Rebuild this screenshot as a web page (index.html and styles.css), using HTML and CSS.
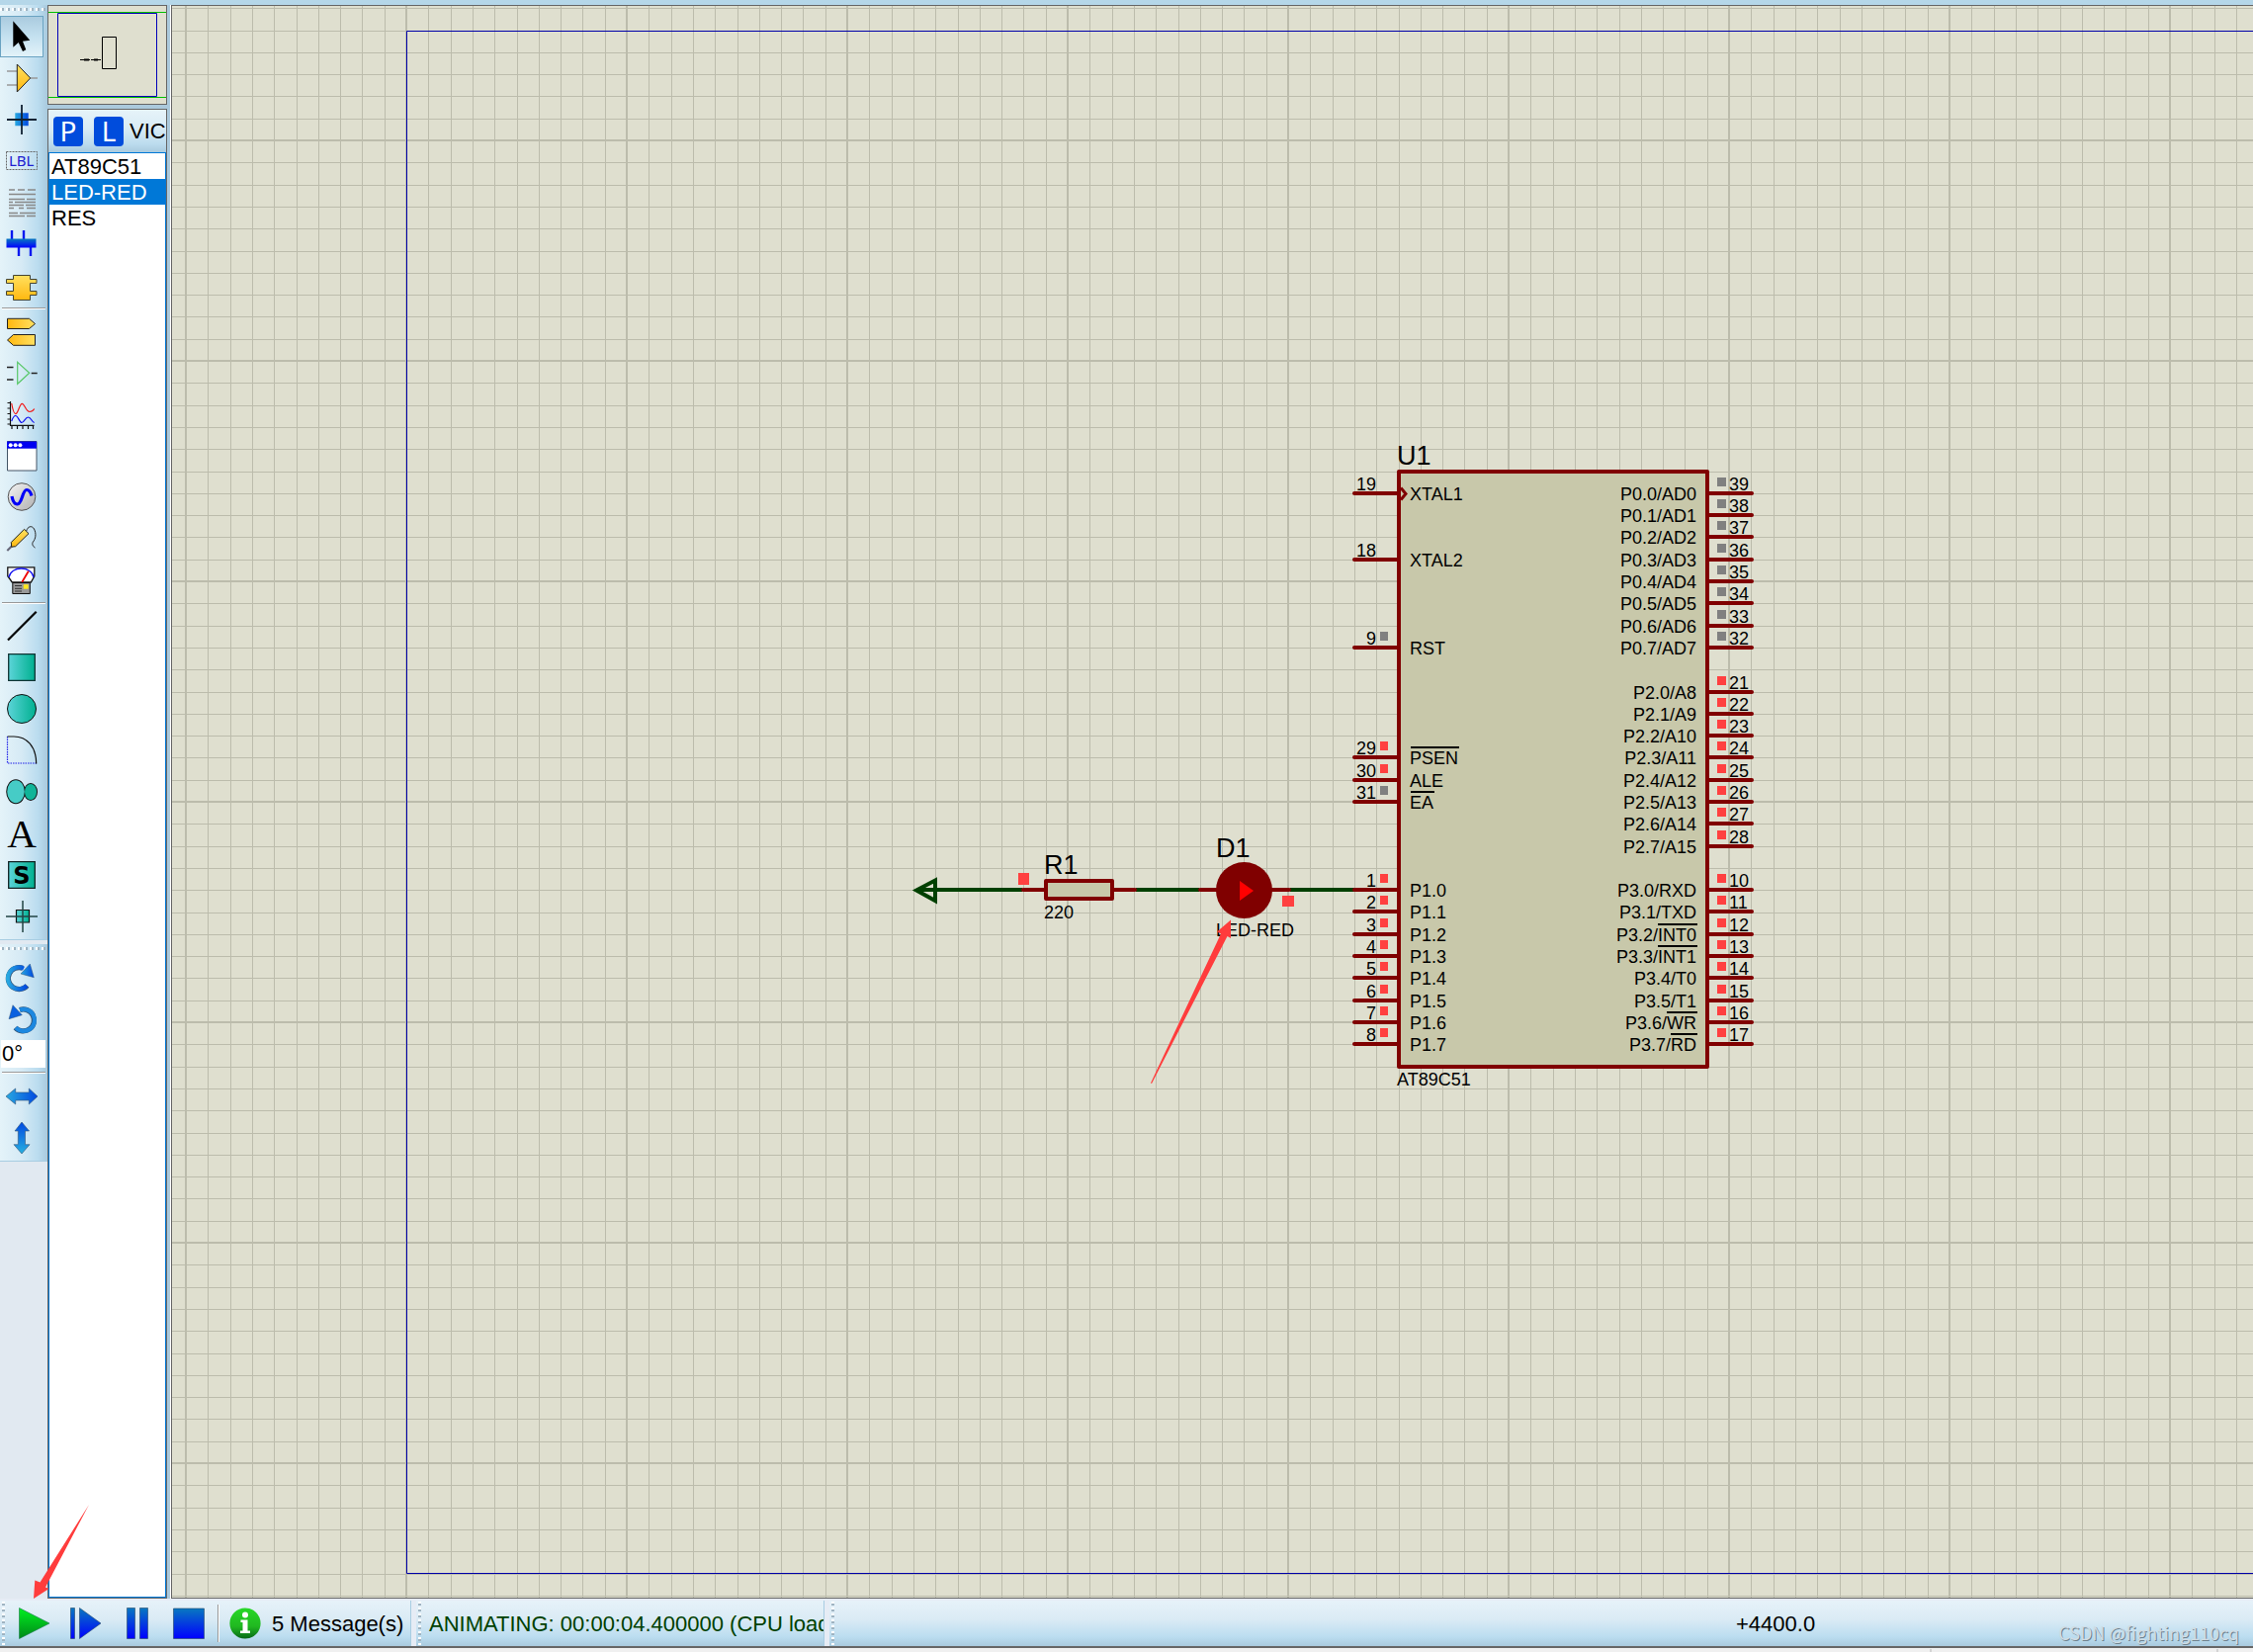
FILE: index.html
```html
<!DOCTYPE html>
<html lang="en">
<head>
<meta charset="utf-8">
<title>Schematic Capture</title>
<link rel="stylesheet" href="styles.css">
</head>
<body>
<svg class="defs" width="0" height="0" aria-hidden="true">
  <defs>
    <linearGradient id="gold" x2="0" y2="1"><stop offset="0" stop-color="#ffe060"/><stop offset="1" stop-color="#ffb810"/></linearGradient>
    <linearGradient id="goldH"><stop offset="0" stop-color="#ffb810"/><stop offset="1" stop-color="#ffe060"/></linearGradient>
    <linearGradient id="teal"><stop offset="0" stop-color="#5cd4d8"/><stop offset="1" stop-color="#00b090"/></linearGradient>
    <linearGradient id="blueV" x2="0" y2="1"><stop offset="0" stop-color="#0878c0"/><stop offset="1" stop-color="#0000ff"/></linearGradient>
    <linearGradient id="skyH"><stop offset="0" stop-color="#28a8e0"/><stop offset="1" stop-color="#0048e0"/></linearGradient>
    <linearGradient id="skyV" x2="0" y2="1"><stop offset="0" stop-color="#0048e0"/><stop offset="1" stop-color="#28b0e0"/></linearGradient>
    <linearGradient id="silver" x2="1" y2="1"><stop offset="0" stop-color="#f4f4f4"/><stop offset="1" stop-color="#b0b0b0"/></linearGradient>
    <linearGradient id="greenV" x2="0" y2="1"><stop offset="0" stop-color="#00f020"/><stop offset="1" stop-color="#008818"/></linearGradient>
    <linearGradient id="infoV" x2="0" y2="1"><stop offset="0" stop-color="#28d828"/><stop offset=".6" stop-color="#20b820"/><stop offset="1" stop-color="#086818"/></linearGradient>
  </defs>
</svg>

<main class="workspace">
  <aside class="rail">
    <div class="toolbar" role="toolbar" aria-label="Modes">
      <div class="grip"></div>
      <button class="tool selected" aria-label="Selection"><svg viewBox="0 0 44 42"><path d="M13.300 5.300V31.700L18.700 27 23 36l3.300-1.700-3.300-8.600 7.300-1z"/></svg></button>
      <button class="tool" aria-label="Component"><svg viewBox="0 0 44 42"><path d="M7 14h10M7 28h10M31 21h7" stroke="#999" stroke-width="1.500"/><path d="M17.300 7v28L30.700 21z" fill="url(#gold)" stroke="#222"/></svg></button>
      <button class="tool" aria-label="Junction"><svg viewBox="0 0 44 42"><path d="M15.300 14.300h13.400v13h-13.400z" fill="url(#skyH)"/><path d="M22 6v30M7 21h30" stroke="#123" stroke-width="1.800"/></svg></button>
      <button class="tool" aria-label="Wire label"><svg viewBox="0 0 44 42"><path d="M6.500 11.500h31v18h-31z" fill="none" stroke="#666" stroke-dasharray="2 1"/><text class="lbl" x="9" y="26">LBL</text></svg></button>
      <button class="tool" aria-label="Text script"><svg viewBox="0 0 44 42"><path d="M9 8h6m3 0h7m3 0h8M9 12.500h27M9 17.500h16m2 0h9M9 20.500h4m2 0h21M9 23.500h15m2 0h10M9 26.500h5m5 0h5m3 0h9M9 31.500h9m2 0h16M9 34.500h16m2 0h9" fill="none" stroke="#888" stroke-width="1.300"/></svg></button>
      <button class="tool" aria-label="Bus"><svg viewBox="0 0 44 42"><path d="M12 7v9M24 7v9M19 24v9M31 24v9" stroke="#0818f0" stroke-width="2.400"/><path d="M6.500 15.500h30v9h-30z" fill="url(#blueV)"/></svg></button>
      <button class="tool" aria-label="Subcircuit"><svg viewBox="0 0 44 42"><path d="M13.500 10.500h17v4H37v4h-6.500v8H37v4h-6.500v5h-17v-5h-7v-4h7v-8h-7v-4h7z" fill="url(#gold)" stroke="#443"/></svg></button>
      <hr class="rule">
      <button class="tool" aria-label="Terminals"><svg viewBox="0 0 44 42"><path d="M7.500 8.300h22l6 5.200-6 5h-22z" fill="url(#goldH)" stroke="#222"/><path d="M35.500 24.500h-22l-6 5.500 6 5.300h22z" fill="url(#goldH)" stroke="#222"/></svg></button>
      <button class="tool" aria-label="Device pins"><svg viewBox="0 0 44 42"><path d="M7 15.500h6.500M7 28h6.500M31.700 21.500h6" stroke="#222" stroke-width="1.500"/><path d="M17.700 10.300v22l12-11z" fill="none" stroke="#58c868" stroke-width="1.200"/></svg></button>
      <button class="tool" aria-label="Graph"><svg viewBox="0 0 44 42"><path d="M10.500 8v24.300H34.500M7.500 9.500h3M7.500 15h3M7.500 20.500h3M7.500 26h3M7.500 31h3M12 32v4M17.500 32v4M23 32v4M28.500 32v4M33.500 32v4" fill="none" stroke="#111" stroke-width="1.200"/><path d="M11.700 10C13 17 14 20.700 15.700 20.700 18.500 20.700 19.500 10.300 22.300 10.300 25 10.300 26 18.500 30 18.500 32 18.500 33.500 17.500 34.700 15.500" fill="none" stroke="#f01818" stroke-width="1.200"/><path d="M11.700 28C13 24.500 14 22.500 15.700 22.500 18.500 22.500 19.500 29.500 22 29.500S25.500 24 28.500 24 32 29 34.700 29.500" fill="none" stroke="#1010f0" stroke-width="1.200"/></svg></button>
      <button class="tool" aria-label="Active popup"><svg viewBox="0 0 44 42"><path d="M7.500 6.500h29.500v29.500H7.500z" fill="#fff" stroke="#456"/><path d="M7 6.500h30v7.200H7z" fill="#0000f0"/><circle cx="10.700" cy="10.200" r="2" fill="#fff"/><circle cx="15.600" cy="10.200" r="2" fill="#fff"/><circle cx="20.400" cy="10.200" r="2" fill="#fff"/></svg></button>
      <button class="tool" aria-label="Generator"><svg viewBox="0 0 44 42"><circle cx="22" cy="20.500" r="13.800" fill="url(#silver)" stroke="#555"/><path d="M12 20c1 5 3 8 5.500 8 5 0 5-14.500 9.500-14.500 2.500 0 4 2.500 5 6" fill="none" stroke="#0000f8" stroke-width="3.200"/></svg></button>
      <button class="tool" aria-label="Probe"><svg viewBox="0 0 44 42"><path d="M7.300 33l5-5" stroke="#667" stroke-width="2"/><path d="M11.300 24.500L24.500 11.300l4.500 4.400L15.700 28.700l-4 .5z" fill="url(#gold)" stroke="#222"/><path d="M26.700 13C28 8.500 32 7 34.500 11c2.500 5 1.500 10-1 13-1.500 2-.5 4.500 2 6" fill="none" stroke="#222"/></svg></button>
      <button class="tool" aria-label="Instruments"><svg viewBox="0 0 44 42"><path d="M7.800 7.800h27v9L31.300 23h-19l-4.500-6.300z" fill="#fff" stroke="#111" stroke-width="1.300"/><path d="M9 18C11 6 32 6 34 18" fill="none" stroke="#1010f0" stroke-width="1.300"/><path d="M22.300 22.700l6.500-11" stroke="#e00" stroke-width="1.800"/><path d="M12.800 23.500h17.500v11H12.800z" fill="#999" stroke="#111"/><path d="M15 26.500h7M15 29.300h7M15 32h7" stroke="#333"/><path d="M23.700 25.200h5v4.500h-5z" fill="#ffe820"/></svg></button>
      <hr class="rule">
      <button class="tool" aria-label="2D line"><svg viewBox="0 0 44 42"><path d="M8 35.500L36.700 6.700" stroke="#000" stroke-width="2.200"/></svg></button>
      <button class="tool" aria-label="2D box"><svg viewBox="0 0 44 42"><path d="M8.700 7.700h26.600v26.600H8.700z" fill="url(#teal)" stroke="#133" stroke-width="1.300"/></svg></button>
      <button class="tool" aria-label="2D circle"><svg viewBox="0 0 44 42"><circle cx="22" cy="21" r="14.500" fill="url(#teal)" stroke="#111"/></svg></button>
      <button class="tool" aria-label="2D arc"><svg viewBox="0 0 44 42"><path d="M7.500 7v27H37" fill="none" stroke="#2020e8" stroke-width="1.200" stroke-dasharray="1.500 1"/><path d="M7.500 7H14C27 7 36.700 17 36.700 34.500" fill="none" stroke="#111" stroke-width="1.200"/></svg></button>
      <button class="tool" aria-label="2D path"><svg viewBox="0 0 44 42"><g fill="#28c0b0" stroke="#111" stroke-width="2"><ellipse cx="16" cy="20.700" rx="8.800" ry="11.500"/><ellipse cx="31" cy="21" rx="6" ry="8"/></g><ellipse cx="16" cy="20.700" rx="8.800" ry="11.500" fill="#46ccc6"/><ellipse cx="31" cy="21" rx="6" ry="8" fill="#10b498"/></svg></button>
      <button class="tool" aria-label="2D text"><svg viewBox="0 0 44 42"><text class="serif-a" x="22" y="35">A</text></svg></button>
      <button class="tool" aria-label="2D symbol"><svg viewBox="0 0 44 42"><path d="M8.700 7.700h26.600v26.600H8.700z" fill="url(#teal)" stroke="#122" stroke-width="1.300"/><text class="bold-s" x="22" y="30">S</text></svg></button>
      <button class="tool" aria-label="2D marker"><svg viewBox="0 0 44 42"><path d="M16.500 14.500h13v12.500h-13z" fill="url(#teal)" stroke="#111" stroke-width="1.200"/><path d="M23 5v32M6 21h32" stroke="#244" stroke-width="1.500"/></svg></button>
    </div>
    <div class="toolbar orient" role="toolbar" aria-label="Orientation">
      <div class="grip"></div>
      <button class="tool" aria-label="Rotate clockwise"><svg viewBox="0 0 44 42"><path d="M27.500 29A11 11 0 1 1 23 11.200" fill="none" stroke="#357" stroke-width="5.200"/><path d="M27 29A11 11 0 1 1 24 11.600" fill="none" stroke="url(#skyH)" stroke-width="4.200"/><path d="M21 17L30.300 7l4 13.700z" fill="url(#skyH)" stroke="#357" stroke-width=".5"/></svg></button>
      <button class="tool" aria-label="Rotate anticlockwise"><svg viewBox="0 0 44 42"><path d="M15.500 29.500A11 11 0 1 0 20 11.500" fill="none" stroke="#357" stroke-width="5.200"/><path d="M16 29.500A11 11 0 1 0 20 11.600" fill="none" stroke="#1c88e0" stroke-width="4.200"/><path d="M13 6.700L9 20.700l13.300-4z" fill="#0860e0" stroke="#357" stroke-width=".5"/></svg></button>
      <input class="angle" type="text" value="0°" aria-label="Rotation angle">
      <hr class="rule wide">
      <button class="tool" aria-label="Mirror horizontally"><svg viewBox="0 0 44 42"><path d="M6 21l9.700-8v4h13.600v-4L38 21l-8.700 8v-4H15.700v4z" fill="url(#skyH)" stroke="#357" stroke-width=".6"/></svg></button>
      <button class="tool" aria-label="Mirror vertically"><svg viewBox="0 0 44 42"><path d="M22 5l7.500 9h-4v13.700H30L22 37l-8-9.300h4.300V14H15z" fill="url(#skyV)" stroke="#357" stroke-width=".6"/></svg></button>
    </div>
  </aside>

  <section class="side">
    <svg class="overview" viewBox="0 0 119 99" aria-label="Overview">
      <path d="M0 6.500h119M0 92.500h119" stroke="#00c000"/>
      <path d="M9.500 7.500h100v84h-100z" fill="none" stroke="#0000b8"/>
      <path d="M54.500 31.500h14v32h-14zM32 54.500h10m1 0h10" fill="none" stroke="#000"/>
      <path d="M36 54.500h5M46 54.500h4" stroke="#000" stroke-width="2"/>
    </svg>
    <div class="devices">
      <header class="devices-head">
        <button class="chip-btn" aria-label="Pick devices">P</button>
        <button class="chip-btn" aria-label="Library manager">L</button>
        <span class="devices-title">VICES</span>
      </header>
      <ul class="device-list">
        <li>AT89C51</li>
        <li class="current">LED-RED</li>
        <li>RES</li>
      </ul>
    </div>
  </section>

  <section class="sheet">
    <svg class="schematic" aria-label="Schematic sheet">
      <defs>
        <pattern id="grid" x="187" y="141" width="223" height="223" patternUnits="userSpaceOnUse">
          <g fill="#bcbcac" shape-rendering="crispEdges">
            <path d="M23 0h1v223h-1zM46 0h1v223h-1zM68 0h1v223h-1zM90 0h1v223h-1zM113 0h1v223h-1zM135 0h1v223h-1zM157 0h1v223h-1zM179 0h1v223h-1zM202 0h1v223h-1z"/>
            <path d="M0 23v1h223v-1zM0 46v1h223v-1zM0 68v1h223v-1zM0 90v1h223v-1zM0 113v1h223v-1zM0 135v1h223v-1zM0 157v1h223v-1zM0 179v1h223v-1zM0 202v1h223v-1z"/>
            <path d="M0 0h2v223H0zM0 0h223v2H0z"/>
          </g>
        </pattern>
        <path id="pin-l" class="lead" d="M-43 0H1"/>
        <path id="pin-r" class="lead" d="M-1 0H43"/>
        <rect id="dot-l" x="-17" y="-16" width="8" height="9"/>
        <rect id="dot-r" x="8" y="-16" width="9" height="9"/>
      </defs>
      <g transform="translate(-174 -6)">
        <rect x="174" y="6" width="100%" height="100%" fill="url(#grid)"/>
        <path d="M4000 31.500H411.500V1591.500H4000" fill="none" stroke="#0000a8"/>

        <!-- net: terminal, R1, D1, P1.0 -->
        <g>
          <path class="wire" d="M930 900H1034M1149 900H1213M1305 900H1370M927 900.500L946 890.500V911z"/>
          <path class="lead" d="M1035 900H1057M1127 900H1148M1214 900H1232M1286 900H1304"/>
          <rect class="part" x="1058" y="891" width="67" height="18"/>
          <circle cx="1258.500" cy="900.500" r="28.500" fill="#800000"/>
          <path d="M1254 891v20l14-10z" fill="#f00"/>
          <path class="high" d="M1030 883h11v12h-11zM1297 906h12v11h-12z"/>
          <text class="ref" x="1056" y="884">R1</text>
          <text x="1056" y="929">220</text>
          <text class="ref" x="1230" y="867">D1</text>
          <text x="1230" y="947">LED-RED</text>
        </g>

        <!-- U1 -->
        <rect class="part" x="1415" y="477" width="312" height="602"/>
        <path d="M1417 493.500l5 6-5 6" fill="none" stroke="#800000" stroke-width="3"/>
        <text class="ref" x="1413" y="470">U1</text>
        <text x="1413" y="1098">AT89C51</text>

        <g class="left-pins">
          <g transform="translate(1413 499)"><use href="#pin-l"/><text class="end" x="-21" y="-3">19</text><text x="13" y="7">XTAL1</text></g>
          <g transform="translate(1413 566)"><use href="#pin-l"/><text class="end" x="-21" y="-3">18</text><text x="13" y="7">XTAL2</text></g>
          <g transform="translate(1413 655)"><use href="#pin-l"/><use class="idle" href="#dot-l"/><text class="end" x="-21" y="-3">9</text><text x="13" y="7">RST</text></g>
          <g transform="translate(1413 766)"><use href="#pin-l"/><use class="high" href="#dot-l"/><text class="end" x="-21" y="-3">29</text><text x="13" y="7">PSEN</text><path class="bar" d="M14-10h49"/></g>
          <g transform="translate(1413 789)"><use href="#pin-l"/><use class="high" href="#dot-l"/><text class="end" x="-21" y="-3">30</text><text x="13" y="7">ALE</text></g>
          <g transform="translate(1413 811)"><use href="#pin-l"/><use class="idle" href="#dot-l"/><text class="end" x="-21" y="-3">31</text><text x="13" y="7">EA</text><path class="bar" d="M14-10h24"/></g>
          <g transform="translate(1413 900)"><use href="#pin-l"/><use class="high" href="#dot-l"/><text class="end" x="-21" y="-3">1</text><text x="13" y="7">P1.0</text></g>
          <g transform="translate(1413 922)"><use href="#pin-l"/><use class="high" href="#dot-l"/><text class="end" x="-21" y="-3">2</text><text x="13" y="7">P1.1</text></g>
          <g transform="translate(1413 945)"><use href="#pin-l"/><use class="high" href="#dot-l"/><text class="end" x="-21" y="-3">3</text><text x="13" y="7">P1.2</text></g>
          <g transform="translate(1413 967)"><use href="#pin-l"/><use class="high" href="#dot-l"/><text class="end" x="-21" y="-3">4</text><text x="13" y="7">P1.3</text></g>
          <g transform="translate(1413 989)"><use href="#pin-l"/><use class="high" href="#dot-l"/><text class="end" x="-21" y="-3">5</text><text x="13" y="7">P1.4</text></g>
          <g transform="translate(1413 1012)"><use href="#pin-l"/><use class="high" href="#dot-l"/><text class="end" x="-21" y="-3">6</text><text x="13" y="7">P1.5</text></g>
          <g transform="translate(1413 1034)"><use href="#pin-l"/><use class="high" href="#dot-l"/><text class="end" x="-21" y="-3">7</text><text x="13" y="7">P1.6</text></g>
          <g transform="translate(1413 1056)"><use href="#pin-l"/><use class="high" href="#dot-l"/><text class="end" x="-21" y="-3">8</text><text x="13" y="7">P1.7</text></g>
        </g>

        <g class="right-pins">
          <g transform="translate(1729 499)"><use href="#pin-r"/><use class="idle" href="#dot-r"/><text x="20" y="-3">39</text><text class="end" x="-13" y="7">P0.0/AD0</text></g>
          <g transform="translate(1729 521)"><use href="#pin-r"/><use class="idle" href="#dot-r"/><text x="20" y="-3">38</text><text class="end" x="-13" y="7">P0.1/AD1</text></g>
          <g transform="translate(1729 543)"><use href="#pin-r"/><use class="idle" href="#dot-r"/><text x="20" y="-3">37</text><text class="end" x="-13" y="7">P0.2/AD2</text></g>
          <g transform="translate(1729 566)"><use href="#pin-r"/><use class="idle" href="#dot-r"/><text x="20" y="-3">36</text><text class="end" x="-13" y="7">P0.3/AD3</text></g>
          <g transform="translate(1729 588)"><use href="#pin-r"/><use class="idle" href="#dot-r"/><text x="20" y="-3">35</text><text class="end" x="-13" y="7">P0.4/AD4</text></g>
          <g transform="translate(1729 610)"><use href="#pin-r"/><use class="idle" href="#dot-r"/><text x="20" y="-3">34</text><text class="end" x="-13" y="7">P0.5/AD5</text></g>
          <g transform="translate(1729 633)"><use href="#pin-r"/><use class="idle" href="#dot-r"/><text x="20" y="-3">33</text><text class="end" x="-13" y="7">P0.6/AD6</text></g>
          <g transform="translate(1729 655)"><use href="#pin-r"/><use class="idle" href="#dot-r"/><text x="20" y="-3">32</text><text class="end" x="-13" y="7">P0.7/AD7</text></g>
          <g transform="translate(1729 700)"><use href="#pin-r"/><use class="high" href="#dot-r"/><text x="20" y="-3">21</text><text class="end" x="-13" y="7">P2.0/A8</text></g>
          <g transform="translate(1729 722)"><use href="#pin-r"/><use class="high" href="#dot-r"/><text x="20" y="-3">22</text><text class="end" x="-13" y="7">P2.1/A9</text></g>
          <g transform="translate(1729 744)"><use href="#pin-r"/><use class="high" href="#dot-r"/><text x="20" y="-3">23</text><text class="end" x="-13" y="7">P2.2/A10</text></g>
          <g transform="translate(1729 766)"><use href="#pin-r"/><use class="high" href="#dot-r"/><text x="20" y="-3">24</text><text class="end" x="-13" y="7">P2.3/A11</text></g>
          <g transform="translate(1729 789)"><use href="#pin-r"/><use class="high" href="#dot-r"/><text x="20" y="-3">25</text><text class="end" x="-13" y="7">P2.4/A12</text></g>
          <g transform="translate(1729 811)"><use href="#pin-r"/><use class="high" href="#dot-r"/><text x="20" y="-3">26</text><text class="end" x="-13" y="7">P2.5/A13</text></g>
          <g transform="translate(1729 833)"><use href="#pin-r"/><use class="high" href="#dot-r"/><text x="20" y="-3">27</text><text class="end" x="-13" y="7">P2.6/A14</text></g>
          <g transform="translate(1729 856)"><use href="#pin-r"/><use class="high" href="#dot-r"/><text x="20" y="-3">28</text><text class="end" x="-13" y="7">P2.7/A15</text></g>
          <g transform="translate(1729 900)"><use href="#pin-r"/><use class="high" href="#dot-r"/><text x="20" y="-3">10</text><text class="end" x="-13" y="7">P3.0/RXD</text></g>
          <g transform="translate(1729 922)"><use href="#pin-r"/><use class="high" href="#dot-r"/><text x="20" y="-3">11</text><text class="end" x="-13" y="7">P3.1/TXD</text></g>
          <g transform="translate(1729 945)"><use href="#pin-r"/><use class="high" href="#dot-r"/><text x="20" y="-3">12</text><text class="end" x="-13" y="7">P3.2/INT0</text><path class="bar" d="M-52-10h40"/></g>
          <g transform="translate(1729 967)"><use href="#pin-r"/><use class="high" href="#dot-r"/><text x="20" y="-3">13</text><text class="end" x="-13" y="7">P3.3/INT1</text><path class="bar" d="M-52-10h40"/></g>
          <g transform="translate(1729 989)"><use href="#pin-r"/><use class="high" href="#dot-r"/><text x="20" y="-3">14</text><text class="end" x="-13" y="7">P3.4/T0</text></g>
          <g transform="translate(1729 1012)"><use href="#pin-r"/><use class="high" href="#dot-r"/><text x="20" y="-3">15</text><text class="end" x="-13" y="7">P3.5/T1</text></g>
          <g transform="translate(1729 1034)"><use href="#pin-r"/><use class="high" href="#dot-r"/><text x="20" y="-3">16</text><text class="end" x="-13" y="7">P3.6/WR</text><path class="bar" d="M-43-10h31"/></g>
          <g transform="translate(1729 1056)"><use href="#pin-r"/><use class="high" href="#dot-r"/><text x="20" y="-3">17</text><text class="end" x="-13" y="7">P3.7/RD</text><path class="bar" d="M-39-10h27"/></g>
        </g>

        <path class="note" d="M1245 930.500L1231 942.500 1235 944.500 1164 1095.500 1165 1096 1241.500 947 1245 949z"/>
      </g>
    </svg>
  </section>
</main>

<footer class="status">
  <div class="segment controls">
    <div class="grip-v"></div>
    <button class="sim play" aria-label="Run the simulation"><svg viewBox="0 0 34 34"><path d="M1.500 1.500v31L32 17z" fill="url(#greenV)" stroke="#174" stroke-width=".6"/></svg></button>
    <button class="sim step" aria-label="Step the simulation"><svg viewBox="0 0 34 34"><path d="M1.500 1.500H5.500V32.500H1.500zM10.500 1.500v31L32 17z" fill="url(#blueV)" stroke="#246" stroke-width=".6"/></svg></button>
    <button class="sim pause" aria-label="Pause the simulation"><svg viewBox="0 0 34 34"><path d="M6.500 1.500h8v31h-8zM19.500 1.500h8v31h-8z" fill="url(#blueV)" stroke="#246" stroke-width=".6"/></svg></button>
    <button class="sim stop" aria-label="Stop the simulation"><svg viewBox="0 0 34 34"><path d="M1.500 2h31v30.500h-31z" fill="url(#blueV)" stroke="#246" stroke-width=".6"/></svg></button>
    <span class="divider"></span>
    <svg class="info" viewBox="0 0 32 32" aria-hidden="true"><circle cx="16" cy="16" r="15.600" fill="url(#infoV)"/><circle cx="16" cy="7.500" r="3" fill="#fff"/><path d="M11.500 12.500H18.500V23.500H21V26H11V23.500H13.500V15H11.500z" fill="#fff"/></svg>
    <span class="messages">5 Message(s)</span>
  </div>
  <div class="segment anim">
    <div class="grip-v"></div>
    <span class="anim-text">ANIMATING: 00:00:04.400000 (CPU load 3%)</span>
  </div>
  <div class="segment coords">
    <div class="grip-v"></div>
    <output class="coord">+4400.0</output>
    <span class="credit">CSDN @fighting110cq</span>
  </div>
  <svg class="run-note" viewBox="0 0 60 98" aria-hidden="true"><path class="note" d="M4 97L5.300 78.500 10.500 80.500 60 2 16 85.500 19.500 87z"/></svg>
</footer>
<div class="tray"><i></i><i></i></div>
</body>
</html>
```
FILE: styles.css
```css
* { box-sizing: border-box; }

body {
  margin: 0;
  min-height: 100vh;
  display: flex;
  flex-direction: column;
  background: #e1e9f1;
  color: #000;
  font: 22px/26px "Liberation Sans", Arial, sans-serif;
  overflow: hidden;
}

button { border: 0; padding: 0; background: none; font: inherit; }
.defs { position: absolute; }

.workspace {
  flex: 1;
  display: flex;
  min-height: 0;
  border-top: 5px solid #b5d7e9;
}

/* tool rail */
.rail { width: 48px; display: flex; flex-direction: column; gap: 4px; }

.toolbar {
  display: flex;
  flex-direction: column;
  padding-bottom: 2px;
  border-bottom: 1px solid #a8cde2;
  background: linear-gradient(90deg, #e4f3f9, #d6eaf5 45%, #badcef 80%, #a9cade);
}

.grip {
  height: 3px;
  margin: 3px 0 5px;
  background: repeating-linear-gradient(90deg, #fff 0 2px, #9fb4c2 2px 4px, transparent 4px 6px);
}
.orient .grip { margin: 3px 0 7px; }

.tool { width: 44px; height: 42px; display: block; }
.tool svg { display: block; width: 44px; height: 42px; overflow: visible; }
.selected { background: linear-gradient(#a9cade, #c4e1f0 50%, #e4f3f9); box-shadow: inset 0 0 0 1px #6aa3c2; }

.lbl { font: 15px "Noto Sans", sans-serif; fill: #2020d0; }
.serif-a { font: 41px "Liberation Serif", serif; text-anchor: middle; }
.bold-s { font: bold 24px "DejaVu Sans", sans-serif; text-anchor: middle; }

.rule {
  width: 44px;
  height: 4px;
  margin: 0 2px;
  border: 0;
  background: linear-gradient(#999 0 1px, #fff 1px 2px) 0 1px / 100% 2px no-repeat;
}
.rule.wide { height: 8px; background-position: 0 4px; }

.angle {
  width: 45px;
  height: 28px;
  margin: 0 1px;
  padding: 0 1px;
  border: 0;
  background: #fff;
  color: #000;
  font: inherit;
}

/* overview and device list */
.side {
  width: 125px;
  display: flex;
  flex-direction: column;
  gap: 4px;
  padding-right: 4px;
  background: #abc9dc;
}
.overview { display: block; width: 121px; height: 101px; border: 1px solid #666; background: #dfdfcf; }
.devices { flex: 1; display: flex; flex-direction: column; border: 1px solid #666; overflow: hidden; }
.devices-head {
  height: 43px;
  display: flex;
  align-items: center;
  padding: 0 5px;
  background: linear-gradient(#e6f3f9, #d8ebf5 45%, #bcdcee 80%, #a9cade);
}
.chip-btn {
  flex: none;
  width: 30px;
  height: 30px;
  margin-right: 11px;
  padding-bottom: 2px;
  border-radius: 4px;
  background: #004cdc;
  color: #fff;
  font: 28px/28px "Noto Sans", sans-serif;
}
.devices-title { margin-left: -5px; }
.device-list {
  flex: 1;
  margin: 0;
  padding: 0;
  list-style: none;
  border: 1px solid #0078d7;
  background: #fff;
}
.device-list li { padding: 2px 0 0 2px; line-height: 24px; }
.device-list .current { background: #0078d7; color: #fff; }

/* schematic */
.sheet {
  flex: 1;
  min-width: 0;
  display: flex;
  border: 1px solid #666;
  border-right: 0;
  box-shadow: -1px 0 #fff;
  background: #dfdfcf;
}
.schematic { flex: 1; min-width: 0; font-size: 18px; }
.ref { font-size: 27px; }
.end { text-anchor: end; }
.lead { fill: none; stroke: #800000; stroke-width: 4px; stroke-linecap: round; }
.wire { fill: none; stroke: #004000; stroke-width: 4px; }
.part { fill: #c8c8aa; stroke: #800000; stroke-width: 4px; stroke-linejoin: round; }
.bar { stroke: #000; stroke-width: 2px; }
.high { fill: #ff4040; }
.idle { fill: #808080; }
.note { fill: #ff3c3c; }

/* status bar */
.status {
  position: relative;
  height: 50px;
  display: flex;
  gap: 5px;
  padding-top: 2px;
  border-bottom: 2px solid #666;
  background: #e6ecf5;
}
.segment {
  display: flex;
  align-items: center;
  white-space: nowrap;
  border-right: 1px solid #a8cde2;
  background: linear-gradient(#e6f2f9, #dbebf5 40%, #bbddf0 80%, #a9cade);
}
.grip-v {
  flex: none;
  align-self: stretch;
  width: 3px;
  margin: 1px 2px;
  background: repeating-linear-gradient(#fff 0 2px, #9fb4c2 2px 4px, transparent 4px 6px);
}
.controls { width: 416px; }
.anim { width: 413px; overflow: hidden; color: #004000; }
.coords { flex: 1; border-right: 0; }
.sim { flex: none; width: 34px; height: 34px; margin-right: 18px; }
.sim svg { display: block; width: 34px; height: 34px; }
.play { margin-left: 11px; }
.stop { margin-right: 12px; }
.divider { width: 2px; height: 38px; margin-right: 10px; background: linear-gradient(90deg, #999 50%, #fff 50%); }
.info { width: 32px; height: 32px; margin-right: 11px; }
.messages, .anim-text, .coord { padding-top: 2px; }
.anim-text { margin-left: 6px; }
.coord { margin-left: 910px; }
.credit {
  margin: 18px 14px 0 auto;
  color: #cfdce4;
  font: 18px/20px "Noto Sans CJK SC", sans-serif;
  text-shadow: 1px 1px #6f828e;
}
.run-note { position: absolute; left: 30px; bottom: 47px; width: 60px; height: 98px; pointer-events: none; }

.tray { height: 4px; display: flex; justify-content: flex-end; gap: 288px; padding-right: 35px; background: #f0f0f0; }
.tray i { width: 2px; height: 3px; margin-top: 1px; background: #d4d4d4; }
```
